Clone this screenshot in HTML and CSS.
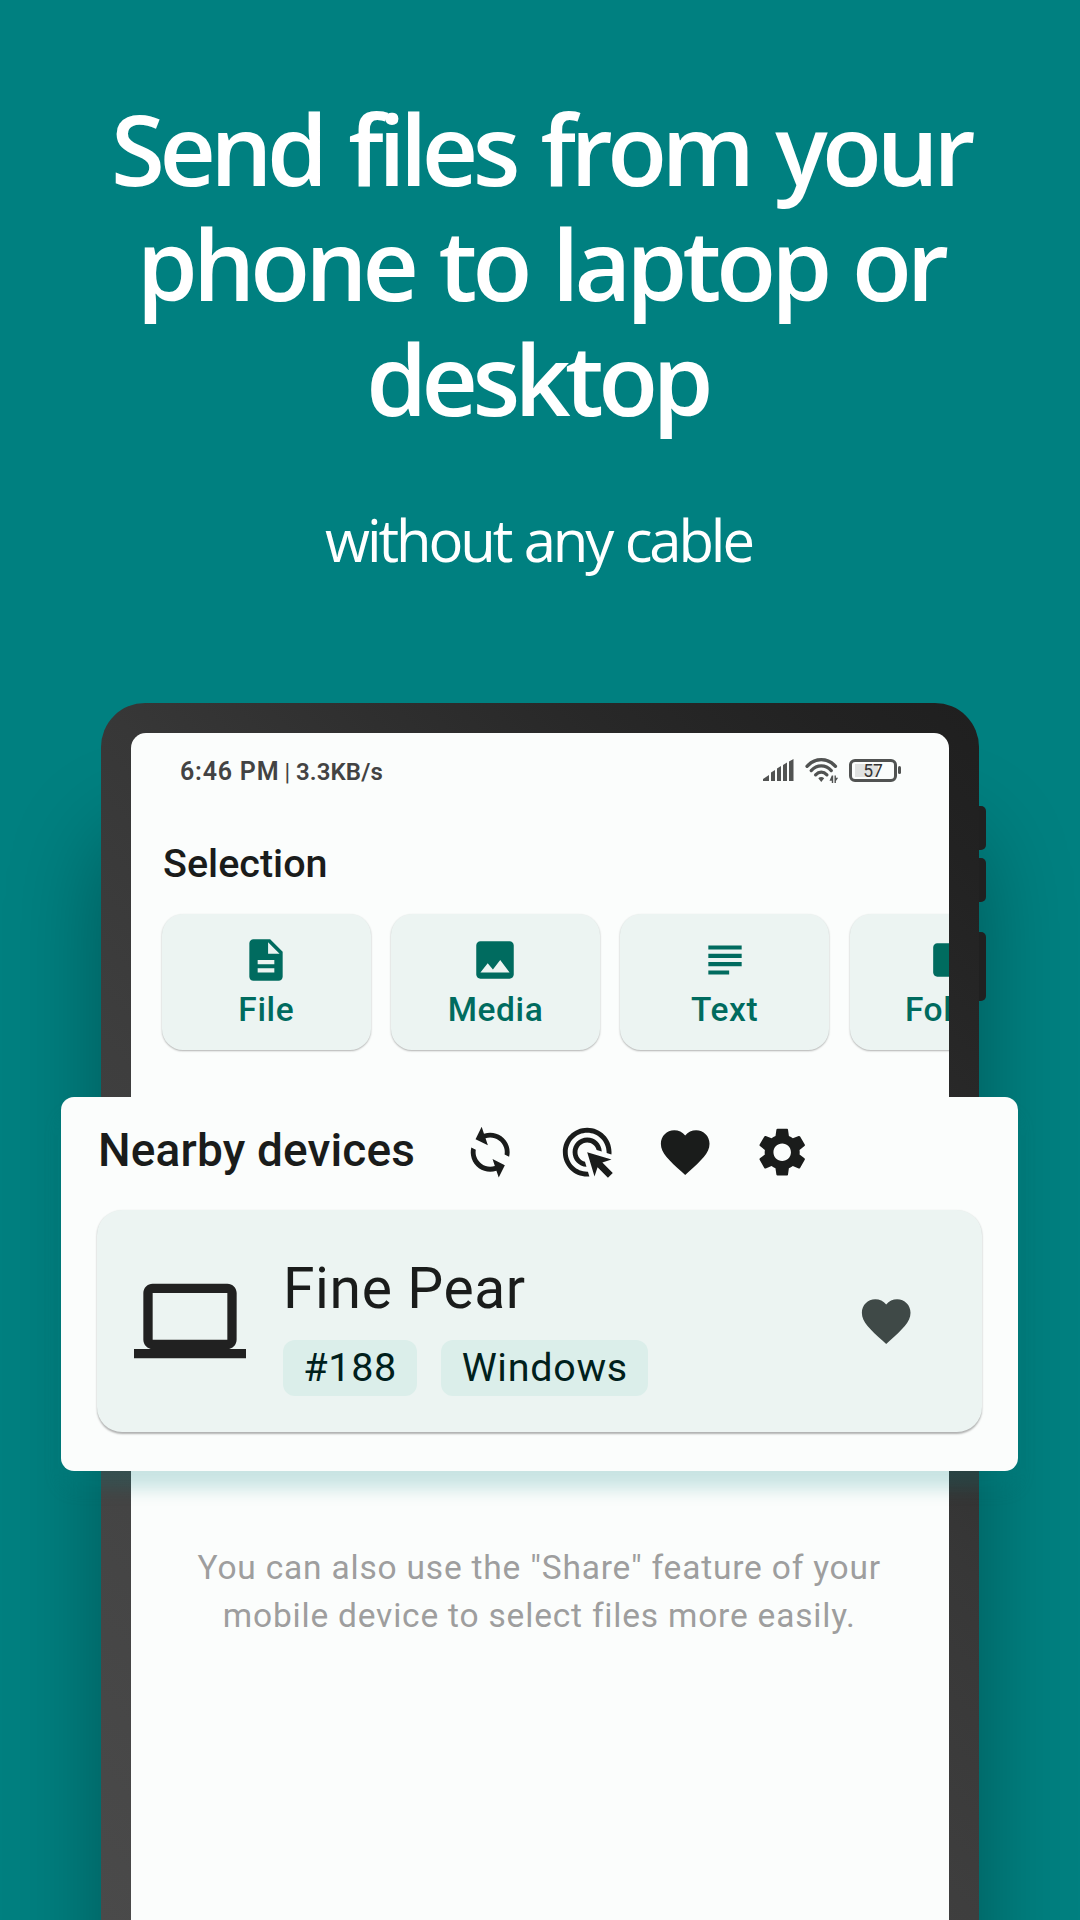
FILE: index.html
```html
<!DOCTYPE html>
<html lang="en">
<head>
<meta charset="utf-8">
<title>Send files from your phone to laptop or desktop</title>
<link rel="stylesheet" href="styles.css">
</head>
<body>
<main class="page">
  <header class="intro">
    <h1 class="headline"><span class="line line-1">Send files from your</span><span class="line line-2">phone to laptop or</span><span class="line line-3">desktop</span></h1>
    <p class="subline">without any cable</p>
  </header>

  <section class="phone">
    <i class="side-button volume-up"></i>
    <i class="side-button volume-down"></i>
    <i class="side-button power"></i>
    <div class="screen">
      <div class="status">
        <div class="status-text"><span class="clock">6:46 PM</span><span class="divider">|</span><span class="speed">3.3KB/s</span></div>
        <div class="status-icons">
          <svg class="signal" viewBox="0 0 32 24"><path d="M0 23v-2l6-4v6zM8 23v-8.500l4-2.500v11zM14 23V10.500l4-2.500v15zM20 23V7l4-2.500V23zM26 23V3.500L30.500 1v22z"/></svg>
          <svg class="wifi" viewBox="0 0 33 27"><g fill="none" stroke-width="3.300" stroke-linecap="round"><path d="M2 9.300C10 .500 22.500.500 30.500 9.300"/><path d="M6.200 13.600C12 7.300 20.500 7.300 26.300 13.600"/><path d="M10.600 17.800C14 14.300 18.500 14.300 21.900 17.800"/></g><path d="M13.300 21.300a4 4 0 0 1 5.900 0L16.250 25zM26.800 18.500h1.400V26h-1.400v-2.200H24.500zM29.500 18.500h1.400v2.200h2.300L30.900 24v2h-1.400z"/></svg>
          <div class="battery"><span class="battery-body">57</span><span class="battery-cap"></span></div>
        </div>
      </div>

      <h2 class="selection-title">Selection</h2>
      <div class="types">
        <div class="type"><svg viewBox="0 0 24 24"><path d="M14 2H6c-1.100 0-1.990.900-1.990 2L4 20c0 1.100.890 2 1.990 2H18c1.100 0 2-.900 2-2V8l-6-6zm2 16H8v-2h8v2zm0-4H8v-2h8v2zm-3-5V3.500L18.500 9H13z"/></svg><span>File</span></div>
        <div class="type"><svg viewBox="0 0 24 24"><path d="M21 19V5c0-1.100-.900-2-2-2H5c-1.100 0-2 .900-2 2v14c0 1.100.900 2 2 2h14c1.100 0 2-.900 2-2zM8.500 13.500l2.500 3.010L14.500 12l4.500 6H5l3.500-4.500z"/></svg><span>Media</span></div>
        <div class="type"><svg viewBox="0 0 24 24"><path d="M14 17H4v2h10v-2zm6-8H4v2h16V9zM4 15h16v-2H4v2zM4 5v2h16V5H4z"/></svg><span>Text</span></div>
        <div class="type"><svg viewBox="0 0 24 24"><path d="M10 4H4c-1.100 0-1.990.900-1.990 2L2 18c0 1.100.900 2 2 2h16c1.100 0 2-.900 2-2V8c0-1.100-.900-2-2-2h-8l-2-2z"/></svg><span>Folder</span></div>
      </div>

      <p class="hint">You can also use the "Share" feature of your<br>mobile device to select files more easily.</p>
    </div>
  </section>

  <section class="panel">
    <div class="panel-head">
      <h2 class="panel-title">Nearby devices</h2>
      <svg class="action sync" viewBox="0 0 24 24"><path d="M12 4V1L8 5l4 4V6c3.310 0 6 2.690 6 6 0 1.010-.250 1.970-.700 2.800l1.460 1.460C19.540 15.030 20 13.570 20 12c0-4.420-3.580-8-8-8zm0 14c-3.310 0-6-2.690-6-6 0-1.010.250-1.970.700-2.800L5.240 7.740C4.460 8.970 4 10.430 4 12c0 4.420 3.580 8 8 8v3l4-4-4-4v3z"/></svg>
      <svg class="action" viewBox="0 0 24 24"><path d="M11.710 17.990C8.530 17.840 6 15.220 6 12c0-3.310 2.690-6 6-6 3.220 0 5.840 2.530 5.990 5.710l-2.100-.630C15.480 9.310 13.890 8 12 8c-2.210 0-4 1.790-4 4 0 1.890 1.310 3.480 3.080 3.890l.630 2.100zM22 12c0 .300-.010.600-.040.900l-1.970-.590c.010-.100.010-.210.010-.310 0-4.420-3.580-8-8-8s-8 3.580-8 8 3.580 8 8 8c.100 0 .210 0 .310-.010l.590 1.970c-.300.030-.600.040-.900.040C6.480 22 2 17.520 2 12S6.480 2 12 2s10 4.480 10 10zm-3.770 4.260L22 15l-10-3 3 10 1.260-3.770 4.270 4.270 1.980-1.980-4.280-4.260z"/></svg>
      <svg class="action" viewBox="0 0 24 24"><path d="M12 21.350l-1.450-1.320C5.400 15.360 2 12.280 2 8.500 2 5.420 4.420 3 7.500 3c1.740 0 3.410.810 4.500 2.090C13.090 3.810 14.760 3 16.500 3 19.580 3 22 5.420 22 8.500c0 3.780-3.400 6.860-8.550 11.540L12 21.350z"/></svg>
      <svg class="action" viewBox="0 0 24 24"><path d="M19.140 12.940c.040-.300.060-.610.060-.940 0-.320-.020-.640-.070-.940l2.030-1.580c.180-.140.230-.410.120-.610l-1.920-3.320c-.120-.220-.370-.290-.590-.220l-2.390.960c-.500-.380-1.030-.700-1.620-.940L14.400 2.810c-.040-.240-.240-.410-.480-.410h-3.840c-.240 0-.430.170-.470.410L9.250 5.350c-.590.240-1.130.570-1.620.940L5.240 5.330c-.220-.080-.470 0-.590.220L2.740 8.870c-.120.210-.080.470.120.610l2.030 1.580c-.050.300-.090.630-.090.940s.020.640.070.940l-2.030 1.580c-.180.140-.230.410-.120.610l1.920 3.320c.120.220.370.290.590.220l2.390-.960c.500.380 1.030.700 1.620.940l.360 2.540c.050.240.240.410.480.410h3.840c.240 0 .440-.170.470-.410l.360-2.540c.590-.240 1.130-.560 1.620-.940l2.390.960c.220.080.470 0 .590-.220l1.920-3.320c.120-.220.070-.470-.120-.610l-2.010-1.580zM12 15.600c-1.980 0-3.600-1.620-3.600-3.600s1.620-3.600 3.600-3.600 3.600 1.620 3.600 3.600-1.620 3.600-3.600 3.600z"/></svg>
    </div>
    <div class="device">
      <svg class="laptop" viewBox="0 0 24 24"><path d="M20 18c1.100 0 1.990-.900 1.990-2L22 6c0-1.100-.900-2-2-2H4c-1.100 0-2 .900-2 2v10c0 1.100.900 2 2 2H0v2h24v-2h-4zM4 6h16v10H4V6z"/></svg>
      <div class="device-info">
        <div class="device-name">Fine Pear</div>
        <div class="chips"><span class="chip">#188</span><span class="chip">Windows</span></div>
      </div>
      <svg class="favorite" viewBox="0 0 24 24"><path d="M12 21.350l-1.450-1.320C5.400 15.360 2 12.280 2 8.500 2 5.420 4.420 3 7.500 3c1.740 0 3.410.810 4.500 2.090C13.090 3.810 14.760 3 16.500 3 19.580 3 22 5.420 22 8.500c0 3.780-3.400 6.860-8.550 11.540L12 21.350z"/></svg>
    </div>
  </section>
</main>
</body>
</html>
```
FILE: styles.css
```css
* { box-sizing: border-box; }

body {
  margin: 0;
  background: #008080;
  font-family: Roboto, sans-serif;
  color: #1a1c1b;
}

h1, h2, p { margin: 0; }
svg { display: block; fill: currentColor; flex: none; }

.page {
  position: relative;
  width: 1080px;
  height: 1920px;
  overflow: hidden;
  display: flex;
  flex-direction: column;
  align-items: center;
}

/* Headline */
.intro {
  flex: none;
  height: 703px;
  padding-top: 91px;
  color: #fff;
  text-align: center;
  font-family: "Open Sans", "Noto Sans", sans-serif;
}
.headline {
  font-size: 98px;
  line-height: 115px;
  font-weight: 600;
  white-space: nowrap;
}
.line { display: block; }
.line-1 { letter-spacing: -5.5px; word-spacing: 5.6px; padding-left: 1px; }
.line-2 { letter-spacing: -4.9px; word-spacing: 4px; padding-left: 1px; }
.line-3 { letter-spacing: -5.6px; padding-right: 6px; }
.subline {
  margin-top: 63.5px;
  padding-right: 3px;
  font-size: 58px;
  line-height: 80px;
  font-weight: 400;
  letter-spacing: -3.1px;
  word-spacing: 1.4px;
}

/* Phone */
.phone {
  position: relative;
  flex: none;
  width: 878px;
  height: 1500px;
  padding: 30px 30px 0 30px;
  border-radius: 44px;
  background: linear-gradient(225deg, #1f1f1f 0, #222 120px, #282828 283px, #373737 621px, #3e3e3e 860px, #4a4a4a 1481px);
  box-shadow: 0 130px 95px rgba(0, 0, 0, .32);
}
.side-button {
  position: absolute;
  right: -7px;
  width: 7px;
  border-radius: 0 5px 5px 0;
  background: #202020;
}
.volume-up { top: 103px; height: 44px; }
.volume-down { top: 155px; height: 44px; }
.power { top: 229px; height: 69px; }

.screen {
  height: 1470px;
  padding: 23px 0 0 31px;
  overflow: hidden;
  border-radius: 15px;
  background: #fbfdfc;
}

/* Status bar */
.status {
  display: flex;
  justify-content: space-between;
  align-items: center;
  height: 30px;
  padding: 0 48px 0 18px;
  color: #434343;
}
.status-text {
  display: flex;
  align-items: baseline;
  padding-top: 2px;
  font-size: 25px;
  line-height: 30px;
  font-weight: 600;
}
.clock { letter-spacing: .8px; }
.divider { margin: 0 6px 0 5px; font-size: 23px; font-weight: 400; }
.speed { font-size: 24px; letter-spacing: .1px; }
.status-icons { display: flex; align-items: center; padding-bottom: 2px; color: #515352; }
.signal { width: 32px; height: 24px; margin-right: 10px; }
.wifi { width: 33px; height: 27px; margin-right: 11px; stroke: none; }
.wifi g { stroke: currentColor; }
.battery { display: flex; align-items: center; gap: 1px; }
.battery-body {
  width: 48px;
  height: 23px;
  border: 3px solid #515352;
  border-radius: 6px;
  background: linear-gradient(90deg, #e0e2e1 23px, transparent 23px) 3px 2px / 35px 13px no-repeat;
  color: #333;
  font-size: 17.5px;
  line-height: 18px;
  text-align: center;
}
.battery-cap { width: 3px; height: 8px; border-radius: 1.5px; background: #515352; }

/* Selection */
.selection-title {
  margin: 53.5px 0 0 1px;
  font-size: 39.5px;
  line-height: 48px;
  font-weight: 500;
}
.types {
  display: flex;
  gap: 20.6px;
  margin-top: 26.5px;
}
.type {
  flex: none;
  width: 208.6px;
  height: 136px;
  padding-top: 21px;
  display: flex;
  flex-direction: column;
  align-items: center;
  gap: 5px;
  border-radius: 21px;
  background: #ecf4f2;
  box-shadow: 0 1px 2px rgba(0, 0, 0, .3);
  color: #006b5f;
  font-size: 33.5px;
  line-height: 40px;
  font-weight: 500;
  letter-spacing: .6px;
}
.type svg { width: 50px; height: 50px; }

.hint {
  margin: 493.7px 32.5px 0 0;
  color: #9e9e9e;
  text-align: center;
  white-space: nowrap;
  font-size: 33.5px;
  line-height: 48px;
  letter-spacing: .8px;
}

/* Floating panel */
.panel {
  position: absolute;
  left: 61px;
  top: 1097px;
  width: 957px;
  height: 374px;
  padding: 25px 36px 0 36px;
  border-radius: 13px;
  background: #fbfdfc;
  box-shadow: 0 18px 17px rgba(0, 128, 128, .2);
}
.panel-head {
  display: flex;
  align-items: center;
  height: 60px;
}
.panel-title {
  width: 363px;
  margin-left: 1px;
  padding-bottom: 4px;
  font-size: 46px;
  line-height: 58px;
  font-weight: 500;
  letter-spacing: .15px;
  white-space: nowrap;
}
.action { width: 58.4px; height: 58.4px; margin-right: 39.1px; }
.sync { transform: rotate(-18.6deg); }

.device {
  display: flex;
  align-items: center;
  height: 222.5px;
  margin-top: 27.5px;
  padding: 0 66.5px 0 37px;
  border-radius: 25px;
  background: #ecf4f2;
  box-shadow: 0 1.5px 2px rgba(0, 0, 0, .3);
}
.laptop { width: 112px; height: 112px; color: #212121; }
.device-info { flex: 1; margin: 10px 0 0 37px; }
.device-name {
  font-size: 57px;
  line-height: 66px;
  letter-spacing: .6px;
}
.chips { display: flex; gap: 24px; margin-top: 17.5px; }
.chip {
  padding: 0 20.3px;
  border-radius: 12px;
  background: #dbeeea;
  color: #00201c;
  font-size: 39.5px;
  line-height: 56px;
  letter-spacing: .7px;
}
.favorite { width: 58.4px; height: 58.4px; margin-top: 1px; color: #3f4947; }
```
